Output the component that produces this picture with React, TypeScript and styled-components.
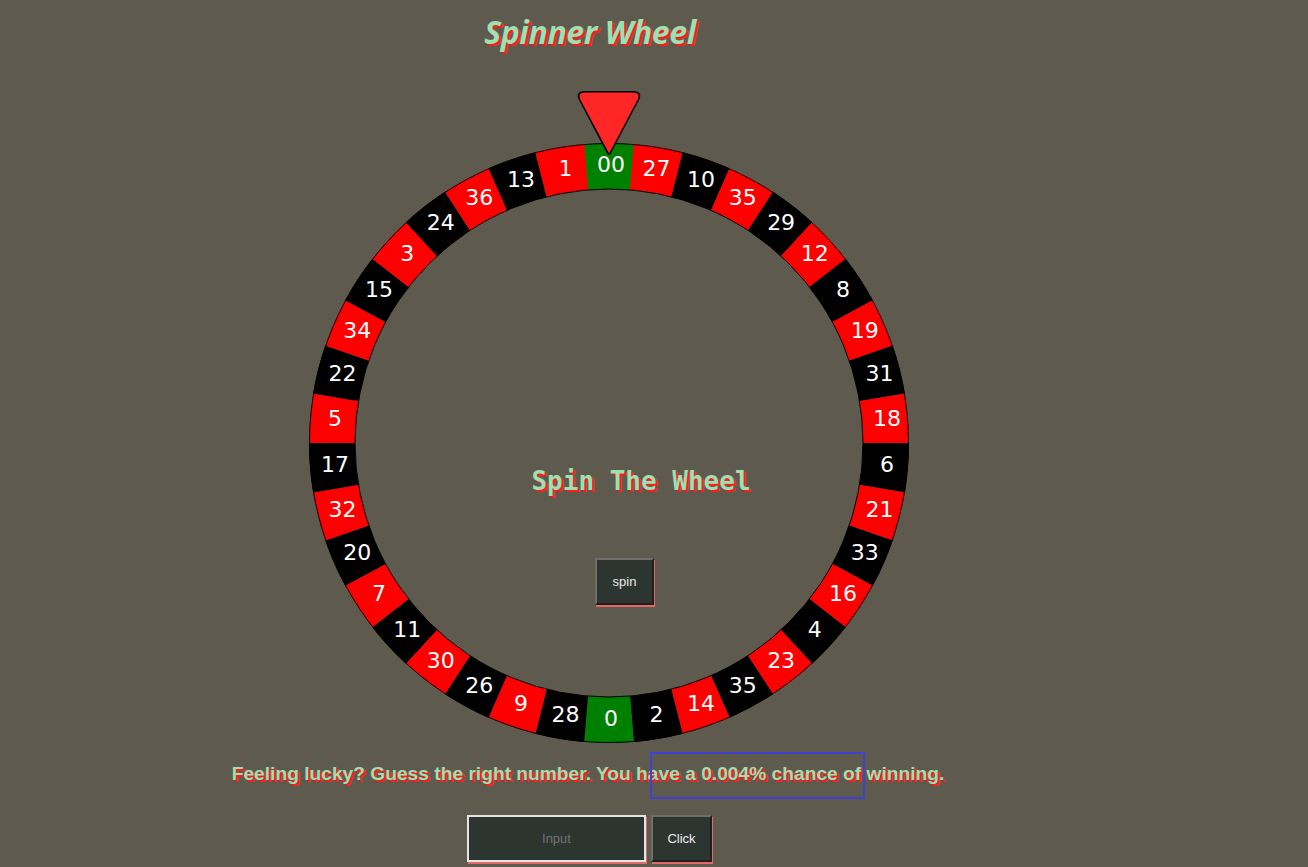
import React from "react";
import styled, { createGlobalStyle } from "styled-components";

const GlobalStyle = createGlobalStyle`
  html, body {
    margin: 0;
    padding: 0;
    background: #5e5b4e;
  }
  body {
    min-height: 100vh;
    font-family: "Liberation Sans", Arial, sans-serif;
  }
`;

const Page = styled.main`
  width: 1180px;
  display: flex;
  flex-direction: column;
  align-items: center;
`;

const Title = styled.h1`
  margin: 0;
  height: 62px;
  line-height: 64px;
  font-family: "Open Sans", "DejaVu Sans", sans-serif;
  font-style: italic;
  font-weight: 700;
  font-size: 32px;
  color: #9ee0b2;
  text-shadow: 2px 2px 0 #ff1a1a;
  letter-spacing: -0.4px;
`;

const WheelWrap = styled.section`
  position: relative;
  width: 600px;
  height: 600px;
  margin-top: 81px;
  margin-left: 38px;
`;

const WheelSvg = styled.svg`
  position: absolute;
  inset: 0;
  display: block;
`;

const Pointer = styled.svg`
  position: absolute;
  top: -52px;
  left: 268px;
  width: 64px;
  height: 65px;
  overflow: visible;
`;

const Center = styled.div`
  position: absolute;
  inset: 0;
  display: flex;
  flex-direction: column;
  align-items: center;
  padding-top: 323px;
  box-sizing: border-box;
`;

const WheelHeading = styled.h2`
  margin: 0 0 0 64px;
  height: 30px;
  line-height: 30px;
  font-family: "DejaVu Sans Mono", monospace;
  font-weight: 700;
  font-size: 26px;
  color: #9ee0b2;
  text-shadow: 2px 2px 0 #ff1a1a;
`;

const DarkButton = styled.button<{ $w: number; $h: number }>`
  box-sizing: border-box;
  width: ${(p) => p.$w}px;
  height: ${(p) => p.$h}px;
  padding: 0;
  background: #2c3530;
  color: #ececec;
  font-family: "Liberation Sans", Arial, sans-serif;
  font-size: 13px;
  border-style: solid;
  border-width: 2px;
  border-color: #6e6e6a #1f1f1f #1f1f1f #6e6e6a;
  box-shadow: 1px 2px 0 #e36868;
  cursor: pointer;
`;

const SpinButton = styled(DarkButton)`
  margin-top: 62px;
  margin-left: 31px;
`;

const MessageWrap = styled.div`
  position: relative;
  margin-top: 20px;
  margin-right: 4px;
`;

const Message = styled.p`
  margin: 0;
  font-family: "Liberation Sans", Arial, sans-serif;
  font-weight: 700;
  font-size: 19.2px;
  line-height: 21px;
  color: #9ee0b2;
  text-shadow: 2px 2px 0 #ff1a1a;
  white-space: nowrap;
`;

const Highlight = styled.div`
  position: absolute;
  left: 418px;
  top: -11px;
  width: 215px;
  height: 47px;
  box-sizing: border-box;
  border: 2px solid #4040d4;
  pointer-events: none;
`;

const FormRow = styled.div`
  display: flex;
  align-items: flex-start;
  gap: 5px;
  margin-top: 31px;
  margin-right: 1px;
`;

const GuessInput = styled.input`
  box-sizing: border-box;
  width: 179px;
  height: 47px;
  background: #2c3530;
  border: 2px solid #e4e4e4;
  box-shadow: 1px 2px 0 #e36868;
  color: #ececec;
  text-align: center;
  font-family: "Liberation Sans", Arial, sans-serif;
  font-size: 13px;
  outline: none;
  &::placeholder {
    color: #727272;
  }
`;

const numbers = [
  "00", "27", "10", "35", "29", "12", "8", "19", "31", "18", "6", "21", "33",
  "16", "4", "23", "35", "14", "2", "0", "28", "9", "26", "30", "11", "7",
  "20", "32", "17", "5", "22", "34", "15", "3", "24", "36", "13", "1",
];

const R = 300;
const RI = 254;
const C = 300;
const STEP = (2 * Math.PI) / numbers.length;

function pt(r: number, a: number): [number, number] {
  return [C + r * Math.sin(a), C - r * Math.cos(a)];
}

function colorFor(n: string, i: number): string {
  if (n === "0" || n === "00") return "#008000";
  return i % 2 === 1 ? "#ff0000" : "#000000";
}

function Wheel() {
  return (
    <WheelSvg width={600} height={600} viewBox="0 0 600 600">
      {numbers.map((n, i) => {
        const a0 = i * STEP - STEP / 2;
        const a1 = i * STEP + STEP / 2;
        const [x0, y0] = pt(R, a0);
        const [x1, y1] = pt(R, a1);
        const [x2, y2] = pt(RI - 2, a1);
        const [x3, y3] = pt(RI - 2, a0);
        const d = `M ${x0} ${y0} A ${R} ${R} 0 0 1 ${x1} ${y1} L ${x2} ${y2} A ${RI - 2} ${RI - 2} 0 0 0 ${x3} ${y3} Z`;
        return <path key={i} d={d} fill={colorFor(n, i)} />;
      })}
      <circle cx={C} cy={C} r={R - 0.5} fill="none" stroke="#000" strokeWidth={1} />
      <circle cx={C} cy={C} r={RI} fill="#5e5b4e" stroke="#000" strokeWidth={1} />
      {numbers.map((n, i) => {
        const a = i * STEP;
        const [x, y] = pt(277, a);
        return (
          <text
            key={`t${i}`}
            x={x + 2}
            y={y + 6}
            textAnchor="middle"
            fill="#ffffff"
            fontFamily="DejaVu Sans, sans-serif"
            fontSize={22}
          >
            {n}
          </text>
        );
      })}
    </WheelSvg>
  );
}

export default function App() {
  return (
    <>
      <GlobalStyle />
      <Page>
        <Title>Spinner Wheel</Title>
        <WheelWrap>
          <Wheel />
          <Pointer viewBox="0 0 64 65">
            <path
              d="M 8 0.8 L 56 0.8 Q 65 0.8 61.5 8.5 L 33.2 62 Q 32 64.2 30.8 62 L 2.5 8.5 Q -1 0.8 8 0.8 Z"
              fill="#ff2626"
              stroke="#000"
              strokeWidth={1.6}
              strokeLinejoin="round"
            />
          </Pointer>
          <Center>
            <WheelHeading>Spin The Wheel</WheelHeading>
            <SpinButton $w={59} $h={47}>spin</SpinButton>
          </Center>
        </WheelWrap>
        <MessageWrap>
          <Message>
            Feeling lucky? Guess the right number. You have a 0.004% chance of winning.
          </Message>
          <Highlight />
        </MessageWrap>
        <FormRow>
          <GuessInput placeholder="Input" />
          <DarkButton $w={61} $h={47}>Click</DarkButton>
        </FormRow>
      </Page>
    </>
  );
}
